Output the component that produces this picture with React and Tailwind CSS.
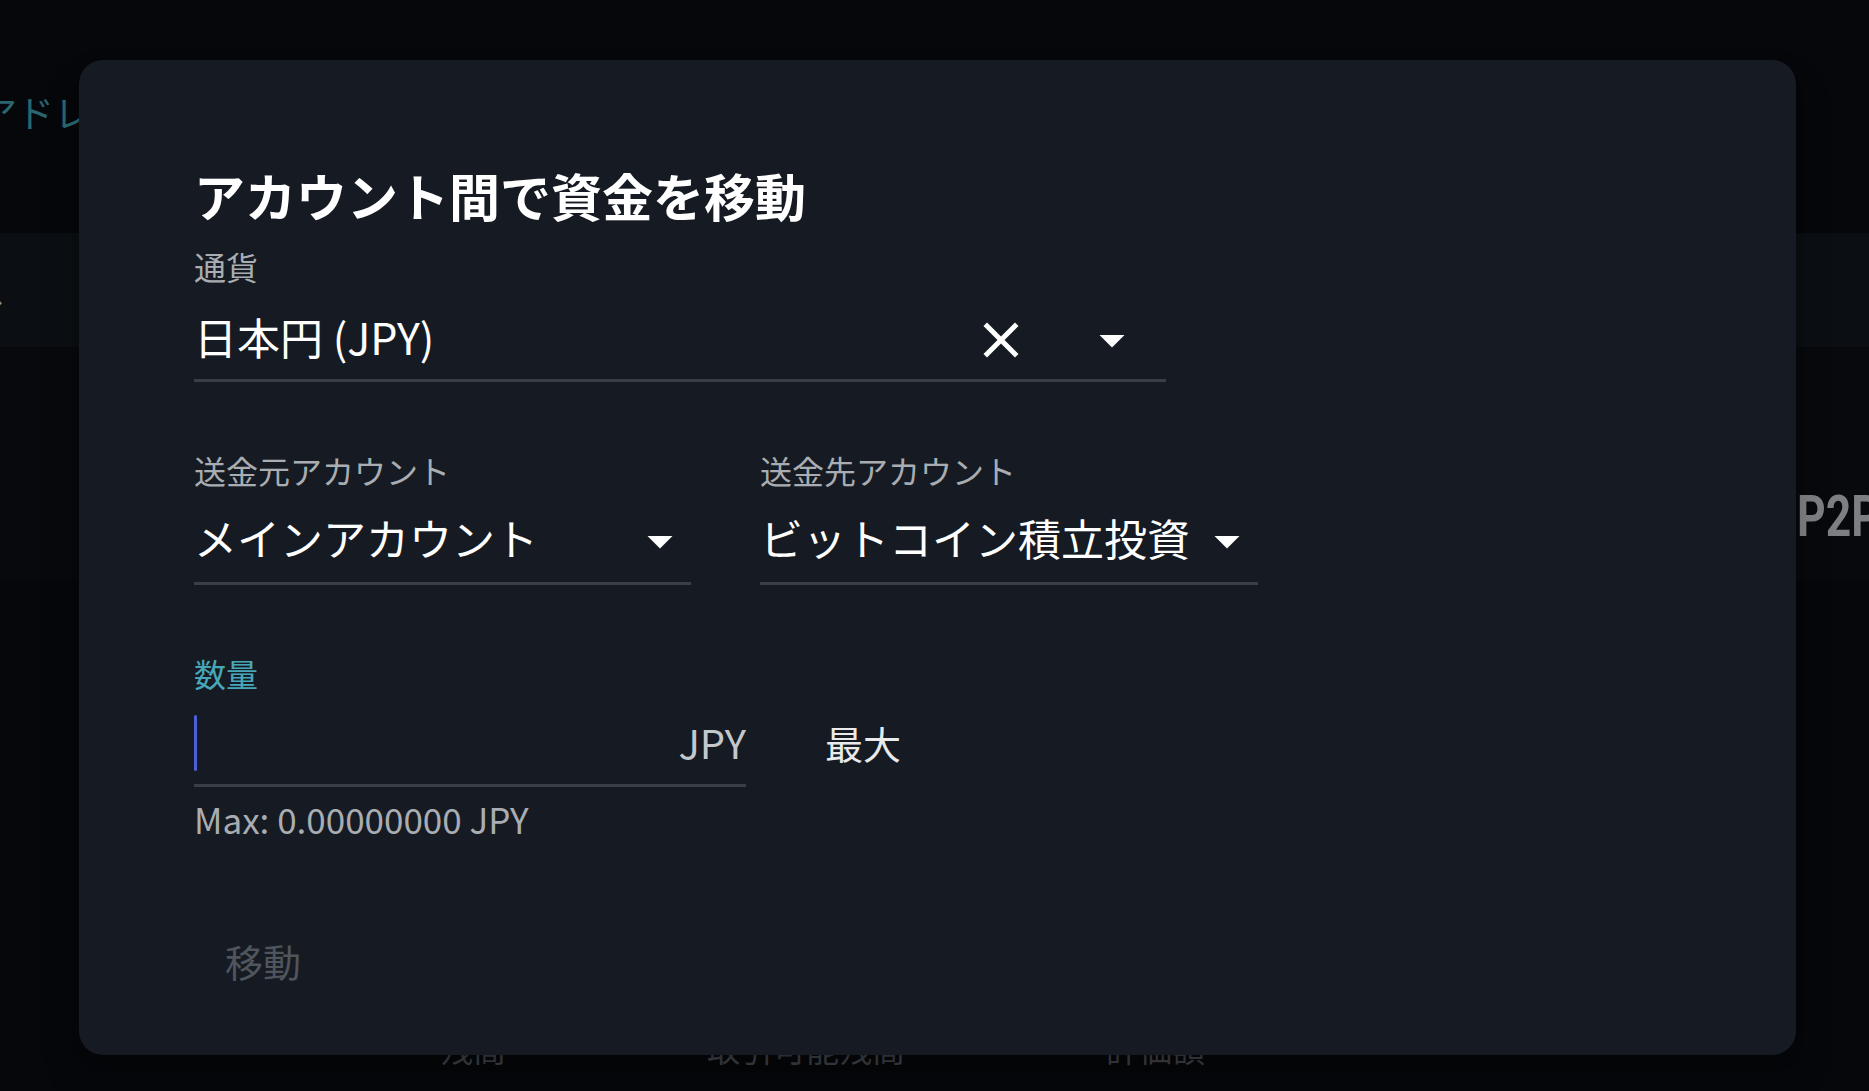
import React from "react";

const font = "font-['Noto_Sans_CJK_JP','Noto_Sans_CJK_SC',sans-serif]";

function CloseIcon() {
  return (
    <svg viewBox="0 0 24 24" width="60" height="60" className="shrink-0 fill-white">
      <path d="M19 6.41 17.59 5 12 10.59 6.41 5 5 6.41 10.59 12 5 17.59 6.41 19 12 13.41 17.59 19 19 17.59 13.41 12z" />
    </svg>
  );
}

function ArrowDrop() {
  return (
    <svg viewBox="0 0 24 24" width="60" height="60" className="shrink-0 fill-white">
      <path d="M7 10l5 5 5-5z" />
    </svg>
  );
}

function AccountSelect({ label, value, width }) {
  return (
    <div className={width}>
      <div className="h-[40px] leading-[37px] text-[32px] text-[#a9adb2]">{label}</div>
      <div className="mt-[8px] h-[85px] border-b-[3px] border-[#3a3f46] flex items-center">
        <span className="flex-1 mb-[7px] text-[43px] leading-none text-white whitespace-nowrap">{value}</span>
        <span className="mr-[1px]">
          <ArrowDrop />
        </span>
      </div>
    </div>
  );
}

export default function App() {
  return (
    <div className={`relative w-[1869px] h-[1091px] overflow-hidden bg-[#05070a] ${font}`}>
      {/* page behind the dialog */}
      <div className="h-[233px] pt-[92px] bg-[#05070a]">
        <div className="-ml-[20px] h-[40px] leading-[40px] text-[37px] text-[#2a6670] whitespace-nowrap">
          アドレス
        </div>
      </div>
      <div className="h-[114px] pt-[37px] bg-[#0b0e12]">
        <div className="-ml-[27px] h-[40px] leading-[40px] text-[32px] text-[#8a8d91]">ス</div>
      </div>
      <div className="h-[233px] pt-[140px] bg-[#07090c]">
        <div className="ml-[1797px] h-[60px] leading-[60px] text-[57px] font-bold text-[#7d7f82] whitespace-nowrap font-['Roboto',sans-serif] origin-left scale-x-[0.78]">
          P2P
        </div>
      </div>
      <div className="h-[511px] pt-[448px] bg-[#05070a]">
        <div className="flex pl-[440px] gap-[201px] h-[40px] leading-[40px] text-[33px] text-[#3c3f44] whitespace-nowrap">
          <span>残高</span>
          <span>取引可能残高</span>
          <span>評価額</span>
        </div>
      </div>

      {/* dialog */}
      <div className="absolute left-[79px] top-[60px] w-[1717px] h-[995px] rounded-[24px] bg-[#161b23] shadow-[0_11px_15px_-7px_rgba(0,0,0,0.2),0_24px_38px_3px_rgba(0,0,0,0.14)]">
        <div className="pl-[115px] pt-[105px]">
          <h2 className="h-[60px] leading-[60px] text-[51px] font-bold text-white whitespace-nowrap">
            アカウント間で資金を移動
          </h2>

          <div className="mt-[21px] h-[40px] leading-[40px] text-[32px] text-[#a9adb2]">通貨</div>
          <div className="mt-[14px] w-[972px] h-[82px] border-b-[3px] border-[#3a3f46] flex items-center">
            <span className="flex-1 mb-[6px] text-[43px] leading-none text-white whitespace-nowrap">日本円 (JPY)</span>
            <CloseIcon />
            <span className="w-[51px]" />
            <ArrowDrop />
            <span className="w-[24px]" />
          </div>

          <div className="mt-[70px] flex gap-[69px]">
            <AccountSelect label="送金元アカウント" value="メインアカウント" width="w-[497px]" />
            <AccountSelect label="送金先アカウント" value="ビットコイン積立投資" width="w-[498px]" />
          </div>

          <div className="mt-[69px] h-[40px] leading-[38px] text-[32px] text-[#47a7b8]">数量</div>
          <div className="mt-[6px] flex items-start">
            <div className="w-[552px] h-[87px] border-b-[3px] border-[#3a3f46] flex items-center">
              <span className="w-[3px] h-[56px] mt-[1px] rounded-full bg-[#4b5fd9]" />
              <span className="flex-1" />
              <span className="text-[40px] leading-none text-[#c4c8cc]">JPY</span>
            </div>
            <button className="ml-[79px] h-[84px] flex items-center text-[38px] text-[#e8eaec]">最大</button>
          </div>
          <div className="mt-[13px] h-[40px] leading-[38px] text-[35px] text-[#a9adb2] whitespace-nowrap">
            Max: 0.00000000 JPY
          </div>

          <button className="mt-[82px] h-[80px] px-[31px] pb-[4px] flex items-center text-[38px] text-[#50555c]" disabled>
            移動
          </button>
        </div>
      </div>
    </div>
  );
}
